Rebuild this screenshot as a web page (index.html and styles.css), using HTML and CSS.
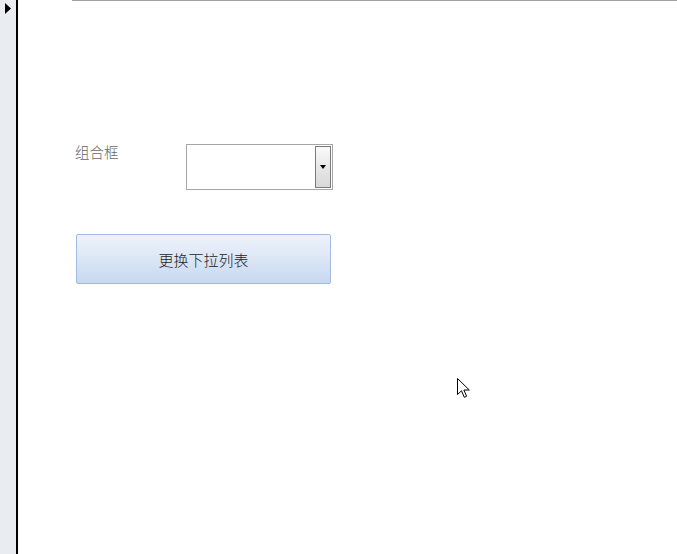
FILE: index.html
```html
<!DOCTYPE html>
<html lang="zh">
<head>
<meta charset="utf-8">
<link rel="stylesheet" href="styles.css">
</head>
<body>
<div class="app">
  <div class="gutter">
    <svg class="marker" width="6" height="11" viewBox="0 0 6 11"><path d="M0 0 L6 5.5 L0 11 Z" fill="#000"/></svg>
  </div>
  <div class="canvas">
    <div class="topline"></div>
    <div class="form">
      <div class="row">
        <span class="label">组合框</span>
        <div class="combo">
          <div class="combo-field"></div>
          <div class="combo-btn"><span class="arrow"></span></div>
        </div>
      </div>
      <button class="action">更换下拉列表</button>
    </div>
    <svg class="cursor" width="14" height="21" viewBox="0 0 14 21">
      <path d="M0.5 0.5 L0.5 16.5 L4.5 12.8 L7.3 19.3 L9.6 18.3 L6.9 12 L12.3 12 Z" fill="#fff" stroke="#000" stroke-width="1" stroke-linejoin="miter"/>
    </svg>
  </div>
</div>
</body>
</html>
```

FILE: styles.css
```css
html, body {
  margin: 0;
  padding: 0;
  background: #fff;
  font-family: "Noto Sans CJK SC", "Liberation Sans", sans-serif;
}
.app {
  display: flex;
  width: 677px;
  height: 554px;
  overflow: hidden;
}
.gutter {
  width: 16px;
  flex: none;
  background: #e9edf1;
  border-right: 2px solid #000;
  position: relative;
}
.marker {
  position: absolute;
  left: 5px;
  top: 3px;
}
.canvas {
  flex: 1;
  position: relative;
  background: #fff;
}
.topline {
  margin-left: 54px;
  height: 1px;
  background: #a0a0a0;
}
.form {
  padding: 143px 0 0 57px;
}
.row {
  display: flex;
  align-items: flex-start;
}
.label {
  width: 111px;
  font-size: 14.5px;
  font-weight: 300;
  line-height: 20px;
  color: #666;
  margin-top: -2px;
}
.combo {
  display: flex;
  width: 145px;
  height: 44px;
  border: 1px solid #a6a6a6;
  background: #fff;
}
.combo-field {
  flex: 1;
}
.combo-btn {
  width: 14px;
  margin: 1px 1px 1px 0;
  border: 1px solid #7a7a7a;
  background: linear-gradient(to bottom, #fafafa, #e6e6e6 55%, #d8d8d8);
  display: flex;
  align-items: center;
  justify-content: center;
}
.arrow {
  width: 0;
  height: 0;
  border-left: 3px solid transparent;
  border-right: 3px solid transparent;
  border-top: 4px solid #000;
}
.action {
  display: block;
  margin: 44px 0 0 1px;
  width: 255px;
  height: 50px;
  border: 1px solid #a3bbdd;
  border-radius: 2px;
  background: linear-gradient(to bottom, #eef3fb, #dbe6f6 50%, #c6d8f0);
  font-family: "Noto Sans CJK SC", "Liberation Sans", sans-serif;
  font-size: 15px;
  font-weight: 300;
  color: #222;
  padding: 0;
}
.cursor {
  position: absolute;
  left: 439px;
  top: 378px;
}
```
